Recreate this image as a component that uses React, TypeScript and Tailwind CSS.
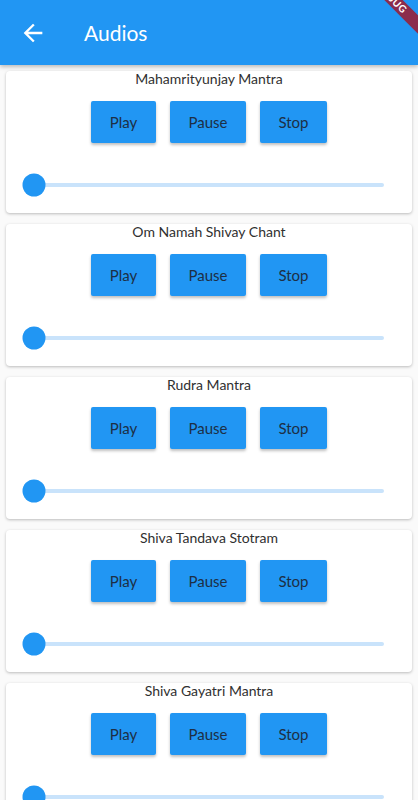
import React from "react"

const tracks = [
  "Mahamrityunjay Mantra",
  "Om Namah Shivay Chant",
  "Rudra Mantra",
  "Shiva Tandava Stotram",
  "Shiva Gayatri Mantra",
]

function AudioCard({ title }: { title: string }) {
  return (
    <div className="mx-[6px] mb-[11px] rounded-[4px] bg-white shadow-[0_1px_3px_rgba(0,0,0,0.25)] pb-[4px]">
      <div className="h-[17px] text-center text-[14px] leading-[16px] text-[#303030]">{title}</div>
      <div className="mt-[13px] flex justify-center gap-[14px]">
        {["Play", "Pause", "Stop"].map((label, i) => (
          <button
            key={label}
            className={`h-[42px] rounded-[2px] bg-[#2196f3] text-[15px] text-[#1d2f45] shadow-[0_2px_3px_rgba(0,0,0,0.25)] ${
              i === 0 ? "w-[65px]" : i === 1 ? "w-[76px]" : "w-[67px]"
            }`}
          >
            {label}
          </button>
        ))}
      </div>
      <div className="mt-[18px] flex h-[48px] items-center pl-[28px] pr-[28px]">
        <div className="relative h-[4px] flex-1 rounded-full bg-[#c9e3fb]">
          <div className="absolute left-0 top-1/2 h-[23px] w-[23px] -translate-x-1/2 -translate-y-1/2 rounded-full bg-[#2196f3]" />
        </div>
      </div>
    </div>
  )
}

export default function App() {
  return (
    <div
      className="relative h-[800px] w-[418px] overflow-hidden bg-[#fafafa]"
      style={{ fontFamily: "Lato, 'Open Sans', sans-serif" }}
    >
      <header className="flex h-[65px] items-center bg-[#2196f3] shadow-[0_2px_4px_rgba(0,0,0,0.25)]">
        <svg viewBox="0 0 24 24" className="ml-[19px] h-[28px] w-[28px]" fill="white">
          <path d="M20 11H7.83l5.59-5.59L12 4l-8 8 8 8 1.41-1.41L7.83 13H20v-2z" />
        </svg>
        <h1 className="ml-[37px] text-[21px] text-white">Audios</h1>
      </header>
      <div className="pt-[6px]">
        {tracks.map((t) => (
          <AudioCard key={t} title={t} />
        ))}
      </div>
      <div className="absolute left-[332px] top-[-8px] flex h-[13px] w-[120px] rotate-45 items-center justify-center bg-[#8b2c4c] text-[10px] font-bold tracking-[0.5px] text-white">
        DEBUG
      </div>
    </div>
  )
}
